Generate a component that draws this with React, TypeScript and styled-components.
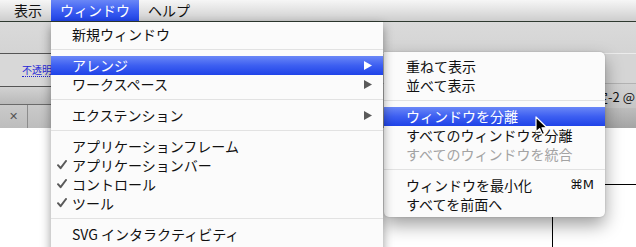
import React from "react";
import styled, { createGlobalStyle, css } from "styled-components";

const GlobalStyle = createGlobalStyle`
  html, body { margin: 0; padding: 0; background: #ffffff; }
  body { font-family: "Noto Sans CJK JP", "DejaVu Sans", sans-serif; }
  * { box-sizing: border-box; }
`;

const FONT = `"Noto Sans CJK JP", "DejaVu Sans", sans-serif`;

const Screen = styled.div`
  position: relative;
  width: 636px;
  height: 247px;
  overflow: hidden;
  background: #ffffff;
  display: flex;
  flex-direction: column;
`;

const MenuBar = styled.div`
  display: flex;
  height: 22px;
  flex: none;
  padding-left: 5px;
  background: linear-gradient(to bottom, #f6f6f6 0%, #e4e4e4 45%, #cdcdcd 100%);
  border-bottom: 1px solid #2f3a30;
`;

const MenuTitle = styled.div<{ $active?: boolean }>`
  height: 21px;
  padding: 0 9px 1px;
  display: flex;
  align-items: center;
  font-family: ${FONT};
  font-size: 14px;
  color: #111;
  ${(p) =>
    p.$active &&
    css`
      color: #fff;
      background: linear-gradient(to bottom, #6a87f7 0%, #3d5ff1 50%, #1f43e8 100%);
    `}
`;

const ControlBar = styled.div`
  height: 31px;
  flex: none;
  background: linear-gradient(to bottom, #dadada, #d4d4d4);
`;

const Workspace = styled.div`
  flex: 1;
  display: grid;
  grid-template-columns: 80px 1fr;
  min-height: 0;
`;

const PanelColumn = styled.div`
  display: flex;
  flex-direction: column;
  border-top: 1px solid #555;
`;

const OptionsRow = styled.div`
  height: 33px;
  flex: none;
  display: flex;
  align-items: center;
  padding-left: 22px;
  background: #d8d8d8;
  border-bottom: 1px solid #555;
`;

const OpacityLabel = styled.span`
  font-family: ${FONT};
  font-size: 10px;
  line-height: 12px;
  color: #2626d6;
  border-bottom: 1px dotted #2626d6;
  white-space: nowrap;
`;

const GradientBand = styled.div`
  height: 18px;
  flex: none;
  background: linear-gradient(to bottom, #d2d2d2, #b9b9b9);
  border-bottom: 1px solid #6a6a6a;
`;

const TabStrip = styled.div`
  height: 23px;
  flex: none;
  display: flex;
  background: linear-gradient(to bottom, #cacaca, #bdbdbd);
`;

const CloseBox = styled.div`
  width: 28px;
  display: flex;
  align-items: center;
  justify-content: center;
  border-right: 1px solid #8c8c8c;
  font-family: "DejaVu Sans", sans-serif;
  font-size: 11px;
  color: #555;
`;

const PanelBody = styled.div`
  flex: 1;
  background: #fff;
`;

const DocArea = styled.div`
  display: flex;
  flex-direction: column;
  border-top: 1px solid #ececec;
  min-width: 0;
`;

const DocOptionsRow = styled.div`
  height: 30px;
  flex: none;
  background: #d5d5d5;
  border-bottom: 1px solid #b2b2b2;
`;

const DocTabBar = styled.div`
  height: 24px;
  flex: none;
  display: flex;
  align-items: center;
  background: linear-gradient(to bottom, #d2d2d2, #c6c6c6);
  overflow: hidden;
`;

const DocTab = styled.span`
  margin-left: 463px;
  font-family: ${FONT};
  font-size: 13px;
  color: #111;
  white-space: nowrap;
`;

const Ruler = styled.div`
  height: 20px;
  flex: none;
  background: linear-gradient(to bottom, #bdbdbd, #a4a4a4);
`;

const Canvas = styled.div`
  flex: 1;
  display: flex;
  flex-direction: column;
  background: #fff;
  padding: 56px 0 0 472px;
`;

const Artboard = styled.div`
  flex: 1;
  min-height: 80px;
  border-top: 1px solid #000;
  border-left: 1px solid #000;
`;

const Menu = styled.div`
  position: absolute;
  background: #fbfbfb;
  font-family: ${FONT};
  font-size: 14px;
  color: #111;
`;

const MainMenu = styled(Menu)`
  top: 22px;
  left: 51px;
  width: 332px;
  height: 240px;
  padding-top: 3px;
  z-index: 3;
  box-shadow: 0 4px 10px rgba(0, 0, 0, 0.4);
`;

const SubMenu = styled(Menu)`
  top: 52px;
  left: 384px;
  width: 221px;
  padding: 5px 0 3px;
  border-radius: 0 5px 5px 5px;
  z-index: 2;
  box-shadow: 0 8px 18px rgba(0, 0, 0, 0.38), 0 0 2px rgba(0, 0, 0, 0.2);
`;

const Item = styled.div<{ $active?: boolean; $disabled?: boolean; $inset?: number }>`
  position: relative;
  height: 19px;
  display: flex;
  align-items: center;
  padding-left: ${(p) => p.$inset ?? 21}px;
  padding-right: 11px;
  padding-bottom: 2px;
  white-space: nowrap;
  color: ${(p) => (p.$disabled ? "#a3a3a3" : "#111")};
  ${(p) =>
    p.$active &&
    css`
      color: #fff;
      background: linear-gradient(to bottom, #6a87f7 0%, #3d5ff1 50%, #1f43e8 100%);
    `}
`;

const Separator = styled.div`
  height: 1px;
  margin: 5px 0 6px;
  background: #e2e2e2;
`;

const Check = styled.svg`
  position: absolute;
  left: 6px;
  top: 4px;
`;

const Arrow = styled.svg`
  position: absolute;
  right: 11px;
  top: 5px;
`;

const Shortcut = styled.span`
  margin-left: auto;
  font-family: "DejaVu Sans", ${FONT};
  font-size: 13px;
`;

const Cursor = styled.svg`
  position: absolute;
  left: 535px;
  top: 116px;
  z-index: 5;
`;

const CheckMark = () => (
  <Check width="10" height="10" viewBox="0 0 10 10">
    <path d="M1 5.2 L3.6 8.2 L9 1" fill="none" stroke="#5a5a5a" strokeWidth="2" strokeLinecap="round" strokeLinejoin="round" />
  </Check>
);

const SubArrow = ({ light }: { light?: boolean }) => (
  <Arrow width="8" height="9" viewBox="0 0 8 9">
    <path d="M0 0 L8 4.5 L0 9 Z" fill={light ? "#ffffff" : "#5a5a5a"} />
  </Arrow>
);

export default function App() {
  return (
    <>
      <GlobalStyle />
      <Screen>
        <MenuBar>
          <MenuTitle>表示</MenuTitle>
          <MenuTitle $active>ウィンドウ</MenuTitle>
          <MenuTitle>ヘルプ</MenuTitle>
        </MenuBar>
        <ControlBar />
        <Workspace>
          <PanelColumn>
            <OptionsRow>
              <OpacityLabel>不透明度</OpacityLabel>
            </OptionsRow>
            <GradientBand />
            <TabStrip>
              <CloseBox>✕</CloseBox>
            </TabStrip>
            <PanelBody />
          </PanelColumn>
          <DocArea>
            <DocOptionsRow />
            <DocTabBar>
              <DocTab>名称未設定-2 @ 66% (CMYK/プレビュー)</DocTab>
            </DocTabBar>
            <Ruler />
            <Canvas>
              <Artboard />
            </Canvas>
          </DocArea>
        </Workspace>

        <MainMenu>
          <Item>新規ウィンドウ</Item>
          <Separator />
          <Item $active>
            アレンジ
            <SubArrow light />
          </Item>
          <Item>
            ワークスペース
            <SubArrow />
          </Item>
          <Separator />
          <Item>
            エクステンション
            <SubArrow />
          </Item>
          <Separator />
          <Item>アプリケーションフレーム</Item>
          <Item>
            <CheckMark />
            アプリケーションバー
          </Item>
          <Item>
            <CheckMark />
            コントロール
          </Item>
          <Item>
            <CheckMark />
            ツール
          </Item>
          <Separator />
          <Item>SVG インタラクティビティ</Item>
        </MainMenu>

        <SubMenu>
          <Item $inset={22}>重ねて表示</Item>
          <Item $inset={22}>並べて表示</Item>
          <Separator />
          <Item $inset={22} $active>
            ウィンドウを分離
          </Item>
          <Item $inset={22}>すべてのウィンドウを分離</Item>
          <Item $inset={22} $disabled>
            すべてのウィンドウを統合
          </Item>
          <Separator />
          <Item $inset={22}>
            ウィンドウを最小化
            <Shortcut>⌘M</Shortcut>
          </Item>
          <Item $inset={22}>すべてを前面へ</Item>
        </SubMenu>

        <Cursor width="13" height="20" viewBox="0 0 13 20">
          <path d="M1 1 L1 16 L4.6 12.6 L7.2 18.6 L9.6 17.6 L7 11.8 L12 11.8 Z" fill="#000" stroke="#fff" strokeWidth="1.2" strokeLinejoin="round" />
        </Cursor>
      </Screen>
    </>
  );
}
